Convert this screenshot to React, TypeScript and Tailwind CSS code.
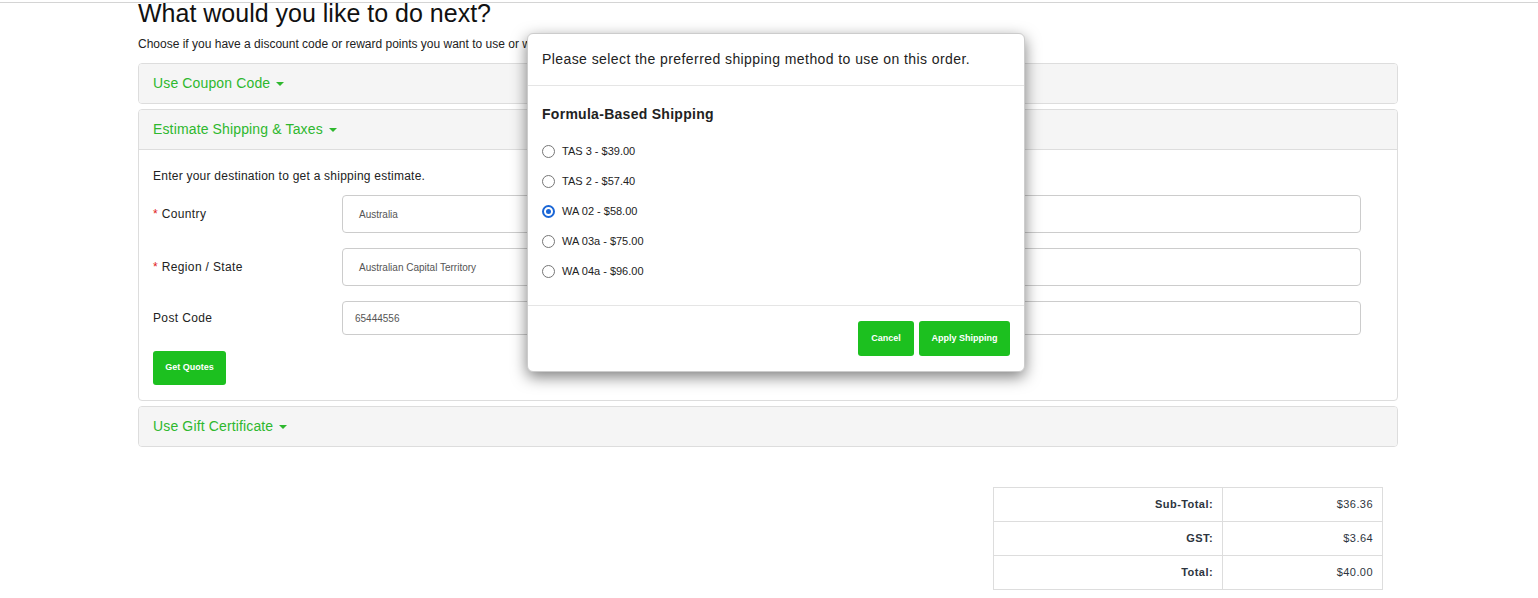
const font = { fontFamily: '"Liberation Sans", Arial, sans-serif' };

function Caret() {
  return <span className="ml-[6px] inline-block h-0 w-0 border-x-[4px] border-t-[4px] border-x-transparent border-t-[#2eb82e] align-middle" />;
}

function PanelHeading({ title, open }: { title: string; open?: boolean }) {
  return (
    <div className={`flex items-center bg-[#f5f5f5] px-[14px] ${open ? 'h-[40px] border-b border-[#ddd]' : 'h-[39px]'}`}>
      <span className="text-[14px] tracking-[0.01em] text-[#2eb82e]">{title}</span>
      <Caret />
    </div>
  );
}

const shippingOptions = [
  { label: 'TAS 3 - $39.00' },
  { label: 'TAS 2 - $57.40' },
  { label: 'WA 02 - $58.00', checked: true },
  { label: 'WA 03a - $75.00' },
  { label: 'WA 04a - $96.00' },
];

const totals = [
  ['Sub-Total:', '$36.36'],
  ['GST:', '$3.64'],
  ['Total:', '$40.00'],
];

export default function App() {
  return (
    <div className="relative h-[598px] w-full overflow-hidden bg-white text-[#222]" style={font}>
      <div className="h-[3px] border-b border-[#d4d4d4]" />

      <div className="ml-[138px] w-[1260px]">
        <h1 className="-mt-[5px] text-[25px] leading-[30px] text-[#111]">What would you like to do next?</h1>
        <p className="mt-[8px] text-[12px] leading-[16px]">
          Choose if you have a discount code or reward points you want to use or would like to estimate your delivery cost.
        </p>

        <div className="mt-[11px] flex flex-col gap-[5px]">
          <div className="overflow-hidden rounded-[4px] border border-[#ddd]">
            <PanelHeading title="Use Coupon Code" />
          </div>

          <div className="overflow-hidden rounded-[4px] border border-[#ddd]">
            <PanelHeading title="Estimate Shipping & Taxes" open />
            <div className="px-[14px] pb-[15px] pt-[18px]">
              <p className="text-[12px] leading-[16px] tracking-[0.02em]">Enter your destination to get a shipping estimate.</p>
              <div className="mt-[11px] flex flex-col gap-[15px]">
                <div className="flex items-center">
                  <label className="w-[189px] text-[12px] tracking-[0.03em]"><span className="text-[#e02020]">*</span> Country</label>
                  <div className="flex h-[38px] w-[1019px] items-center rounded-[4px] border border-[#ccc] px-[16px] text-[10px] text-[#555]">Australia</div>
                </div>
                <div className="flex items-center">
                  <label className="w-[189px] text-[12px] tracking-[0.03em]"><span className="text-[#e02020]">*</span> Region / State</label>
                  <div className="flex h-[38px] w-[1019px] items-center rounded-[4px] border border-[#ccc] px-[16px] text-[10px] text-[#555]">Australian Capital Territory</div>
                </div>
                <div className="flex items-center">
                  <label className="w-[189px] text-[12px] tracking-[0.03em]">Post Code</label>
                  <div className="flex h-[34px] w-[1019px] items-center rounded-[4px] border border-[#ccc] px-[12px] text-[10px] text-[#555]">65444556</div>
                </div>
              </div>
              <button className="mt-[16px] h-[34px] w-[73px] rounded-[3px] bg-[#1cc01f] text-[9px] font-bold text-white">Get Quotes</button>
            </div>
          </div>

          <div className="overflow-hidden rounded-[4px] border border-[#ddd]">
            <PanelHeading title="Use Gift Certificate" />
          </div>
        </div>

        <div className="mt-[40px] flex justify-end pr-[15px]">
          <table className="w-[390px] border-collapse text-[11px] tracking-[0.04em] text-[#2d3540]">
            <tbody>
              {totals.map(([k, v]) => (
                <tr key={k} className="h-[34px]">
                  <td className="w-[229px] border border-[#ddd] pr-[9px] text-right font-bold">{k}</td>
                  <td className="border border-[#ddd] pr-[9px] text-right">{v}</td>
                </tr>
              ))}
            </tbody>
          </table>
        </div>
      </div>

      <div className="absolute left-[527px] top-[33px] w-[498px] rounded-[6px] border border-[#ccc] bg-white shadow-[0_5px_15px_rgba(0,0,0,0.5)]">
        <div className="flex h-[52px] items-center border-b border-[#e5e5e5] px-[14px] text-[14px] tracking-[0.03em]">
          Please select the preferred shipping method to use on this order.
        </div>
        <div className="px-[14px] pb-[19px] pt-[18px]">
          <h4 className="text-[14px] font-bold leading-[20px] tracking-[0.02em]">Formula-Based Shipping</h4>
          <div className="mt-[12px] flex flex-col">
            {shippingOptions.map((o) => (
              <label key={o.label} className="flex h-[30px] items-center gap-[7px] text-[11px]">
                <span
                  className={`flex h-[13px] w-[13px] items-center justify-center rounded-full ${
                    o.checked ? 'border-[2px] border-[#1a66d6]' : 'border border-[#767676]'
                  }`}
                >
                  {o.checked && <span className="h-[5px] w-[5px] rounded-full bg-[#1a66d6]" />}
                </span>
                {o.label}
              </label>
            ))}
          </div>
        </div>
        <div className="flex justify-end gap-[5px] border-t border-[#e5e5e5] px-[14px] py-[15px]">
          <button className="h-[35px] w-[56px] rounded-[3px] bg-[#1cc01f] text-[9px] font-bold text-white">Cancel</button>
          <button className="h-[35px] w-[91px] rounded-[3px] bg-[#1cc01f] text-[9px] font-bold text-white">Apply Shipping</button>
        </div>
      </div>
    </div>
  );
}
